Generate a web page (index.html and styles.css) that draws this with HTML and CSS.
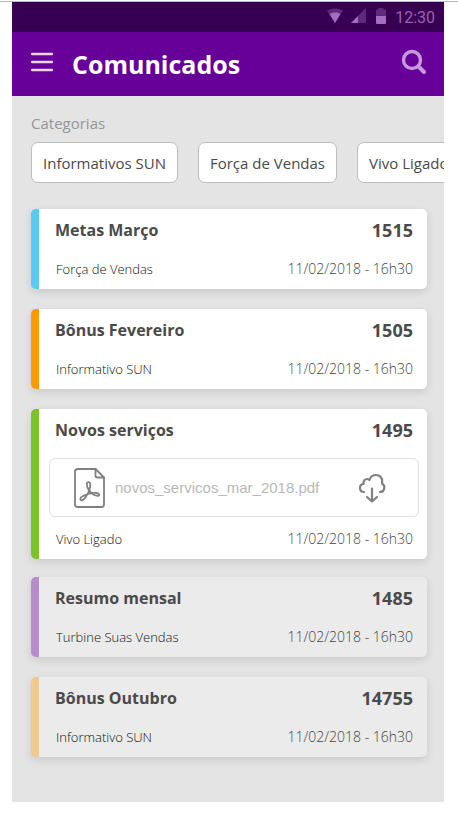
FILE: index.html
```html
<!DOCTYPE html>
<html lang="pt-BR">
<head>
<meta charset="utf-8">
<meta name="viewport" content="width=device-width, initial-scale=1">
<title>Comunicados</title>
<link rel="stylesheet" href="styles.css">
</head>
<body>
<div class="screen">
  <div class="status">
    <svg class="status-icons" width="60" height="16" viewBox="0 0 60 16" aria-hidden="true">
      <path class="dim" d="M0 2.5C4.500-.3 11.500-.3 16 2.500L8 15Z"/>
      <path class="lit" d="M2.500 6C5.500 3.900 10.500 3.900 13.500 6L8 15Z"/>
      <path class="dim" d="M39 0V15H24Z"/>
      <path class="lit" d="M31 8V15H24Z"/>
      <path class="dim" d="M49 2.500Q49 1.500 50 1.500H51.500V0H56.500V1.500H58Q59 1.500 59 2.500V8H49Z"/>
      <path class="lit" d="M49 8H59V15Q59 16 58 16H50Q49 16 49 15Z"/>
    </svg>
    <span class="clock">12:30</span>
  </div>
  <header class="bar">
    <button class="icon-button" type="button" aria-label="Menu">
      <svg width="24" height="20" viewBox="0 0 24 20"><path d="M2 2H22M2 10H22M2 18H22" fill="none" stroke="#e6d6ef" stroke-width="2.300" stroke-linecap="round"/></svg>
    </button>
    <h1>Comunicados</h1>
    <button class="icon-button" type="button" aria-label="Buscar">
      <svg width="26" height="26" viewBox="0 0 26 26"><g fill="none" stroke="#c799dc" stroke-linecap="round"><circle cx="11" cy="11" r="8.500" stroke-width="3.400"/><path d="M17.500 17.500L23 23" stroke-width="4"/></g></svg>
    </button>
  </header>
  <main>
    <h2>Categorias</h2>
    <nav class="chips" aria-label="Categorias">
      <button class="chip" type="button">Informativos SUN</button>
      <button class="chip" type="button">Força de Vendas</button>
      <button class="chip" type="button">Vivo Ligado</button>
    </nav>
    <div class="cards">
      <article class="card blue">
        <div class="row"><h3>Metas Março</h3><span class="number">1515</span></div>
        <div class="row meta"><span class="category">Força de Vendas</span><time>11/02/2018 - 16h30</time></div>
      </article>
      <article class="card orange">
        <div class="row"><h3>Bônus Fevereiro</h3><span class="number">1505</span></div>
        <div class="row meta"><span class="category">Informativo SUN</span><time>11/02/2018 - 16h30</time></div>
      </article>
      <article class="card green">
        <div class="row"><h3>Novos serviços</h3><span class="number">1495</span></div>
        <a class="file" href="#">
          <svg width="32" height="40" viewBox="0 0 32 40" fill="none" stroke="#808080" stroke-width="1.800" stroke-linejoin="round" stroke-linecap="round" aria-hidden="true">
            <path d="M4 1H21.500L30 9.500V36.500Q30 39 27.500 39H3.500Q1 39 1 36.500V3.500Q1 1 4 1Z"/>
            <path d="M21.500 1V7.500Q21.500 9.500 23.500 9.500H30"/>
            <path d="M14.500 21.500C12 17 12.500 14.200 14.500 14.200C16.700 14.200 16.700 17.500 15.500 21.500C14 26 10.500 32 8 32.300C5.500 32.300 5.700 29.500 9 28C13 26 19 24.700 22.500 25C26 25.300 26 28 23.500 27.800C20 27.500 16.500 24.500 14.500 21.500Z"/>
          </svg>
          <span class="file-name">novos_servicos_mar_2018.pdf</span>
          <svg width="28" height="30" viewBox="0 0 28 30" fill="none" stroke="#808080" stroke-width="2.200" stroke-linecap="round" stroke-linejoin="round" aria-hidden="true">
            <path d="M6 19C3.500 19 2 17.300 2 15C2 12.500 3.500 11 5.500 11C5 8 7 6 9 6Q10.500 6 11.500 7C12.500 3.500 15 2 18 2C22 2 24.500 5 24.200 8.800Q23.800 10 24.500 11C26 12 26.500 13.500 26.300 15C26 17.500 24.500 19 22 19"/>
            <path d="M14 15.500V28M9 24L14 28.500L19 24"/>
          </svg>
        </a>
        <div class="row meta"><span class="category">Vivo Ligado</span><time>11/02/2018 - 16h30</time></div>
      </article>
    </div>
    <div class="cards read">
      <article class="card purple">
        <div class="row"><h3>Resumo mensal</h3><span class="number">1485</span></div>
        <div class="row meta"><span class="category">Turbine Suas Vendas</span><time>11/02/2018 - 16h30</time></div>
      </article>
      <article class="card sand">
        <div class="row"><h3>Bônus Outubro</h3><span class="number">14755</span></div>
        <div class="row meta"><span class="category">Informativo SUN</span><time>11/02/2018 - 16h30</time></div>
      </article>
    </div>
  </main>
</div>
</body>
</html>
```
FILE: styles.css
```css
* { box-sizing: border-box; }
body {
  margin: 0;
  padding: 1px 14px 12px 12px;
  min-height: 100vh;
  display: flex;
  flex-direction: column;
  background: linear-gradient(#bababa, #bababa) 0 1px / 100% 1px no-repeat #fff;
  font-family: "Open Sans", "Noto Sans", sans-serif;
  color: #4a4a4a;
}
h1, h2, h3 { margin: 0; }
button { font: inherit; color: inherit; cursor: pointer; }
.screen {
  flex: 1;
  margin-top: 1px;
  display: flex;
  flex-direction: column;
  background: #e4e4e4;
}
.status {
  height: 30px;
  padding: 0 9px;
  display: flex;
  align-items: center;
  justify-content: flex-end;
  gap: 8px;
  background: #380052;
}
.status-icons { margin-bottom: 2px; }
.dim { fill: #5f2a7c; }
.lit { fill: #a56cc0; }
.clock {
  font: 16px/20px Roboto, sans-serif;
  color: #9a62b5;
  padding-top: 2px;
}
.bar {
  height: 64px;
  padding: 0 16px 0 17px;
  display: flex;
  align-items: center;
  background: #660099;
  color: #fff;
}
.icon-button {
  display: flex;
  padding: 0 1px;
  border: 0;
  background: none;
  margin-bottom: 4px;
}
h1 {
  flex: 1;
  padding-left: 17px;
  font-size: 25px;
  line-height: 32px;
}
main { flex: 1; padding: 17px 17px 44px 19px; overflow: hidden; }
h2 {
  font-size: 15px;
  line-height: 20px;
  font-weight: 400;
  color: #969696;
}
.chips {
  display: flex;
  gap: 20px;
  margin: 9px -17px 26px 0;
  overflow: hidden;
}
.chip {
  flex: none;
  height: 41px;
  padding: 0 11px;
  border: 1px solid #bdbdbd;
  border-radius: 7px;
  background: #fff;
  font-size: 15px;
}
.cards { display: grid; gap: 20px; }
.cards.read { margin-top: 18px; }
.card {
  padding: 9px 14px 8px 16px;
  border-left: 8px solid;
  border-radius: 5px;
  background: #fff;
  box-shadow: 0 3px 8px rgba(0, 0, 0, .12);
}
.read .card { background: #ebebeb; }
.blue { border-color: #56ccf2; }
.orange { border-color: #ff9900; }
.green { border-color: #7ac423; }
.purple { border-color: #b78ccc; }
.sand { border-color: #f2c98c; }
.row {
  display: flex;
  align-items: center;
  justify-content: space-between;
  line-height: 24px;
}
h3 { font-size: 16px; }
.number { font-size: 18px; font-weight: 700; }
.meta { margin-top: 15px; }
.category { padding-left: 1px; font-size: 13px; font-weight: 300; color: #111; }
time { font-size: 14px; font-weight: 300; color: #444; }
.file {
  display: flex;
  align-items: center;
  height: 59px;
  margin: 16px -6px 10px -6px;
  padding: 0 32px 0 24px;
  border: 1px solid #e0e0e0;
  border-radius: 6px;
  color: #b8b8b8;
  text-decoration: none;
}
.file-name {
  flex: 1;
  padding-left: 9px;
  font: 15px/20px "Liberation Sans", Arial, sans-serif;
}
.file + .meta { margin-top: 0; }
```
